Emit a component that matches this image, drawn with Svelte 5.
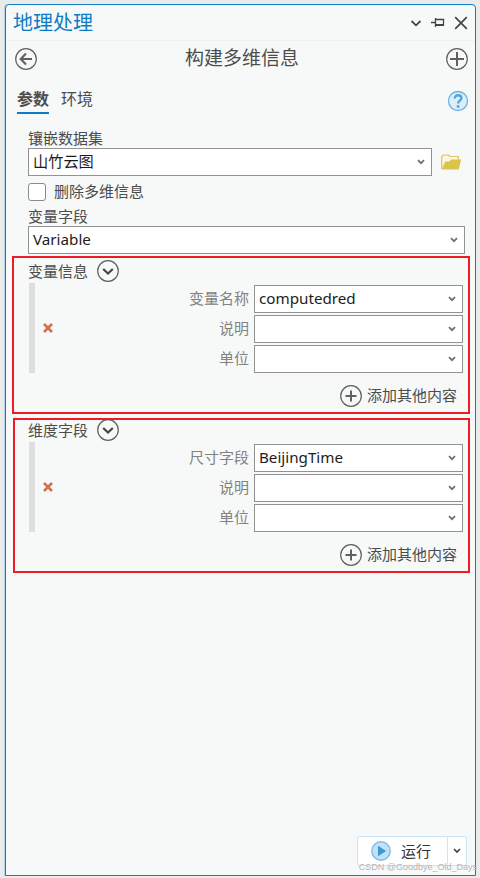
<script lang="ts">
  interface Field {
    label: string;
    value: string;
  }

  interface Group {
    id: string;
    title: string;
    fields: Field[];
  }

  let groups: Group[] = $state([
    {
      id: 'variables',
      title: '变量信息',
      fields: [
        { label: '变量名称', value: 'computedred' },
        { label: '说明', value: '' },
        { label: '单位', value: '' }
      ]
    },
    {
      id: 'dimensions',
      title: '维度字段',
      fields: [
        { label: '尺寸字段', value: 'BeijingTime' },
        { label: '说明', value: '' },
        { label: '单位', value: '' }
      ]
    }
  ]);

  const tabs = ['参数', '环境'];
  let activeTab = $state(0);
  let removeInfo = $state(false);
</script>

{#snippet combo(value: string)}
  <div class="combo">
    <span>{value}</span>
    <svg width="8" height="6" viewBox="0 0 8 6"><path d="M1 1.2 4 4.2 7 1.2" fill="none" stroke="#707070" stroke-width="1.8" /></svg>
  </div>
{/snippet}

{#snippet plus(size: number)}
  <svg width="22" height="22" viewBox="0 0 22 22" fill="none" stroke="#606060">
    <circle cx="11" cy="11" r="10.3" stroke-width="1.2" />
    <path d="M{11 - size} 11H{11 + size}M11 {11 - size}V{11 + size}" stroke-width="2" />
  </svg>
{/snippet}

<div class="window">
  <section class="pane">
    <header class="titlebar">
      <h1>地理处理</h1>
      <div class="window-tools">
        <svg width="12" height="12" viewBox="0 0 12 12"><path d="M1.5 4 6 8.3 10.5 4" fill="none" stroke="#444" stroke-width="1.8" /></svg>
        <svg width="14" height="12" viewBox="0 0 14 12" fill="none" stroke="#444"><path d="M0 5.5H4.5M4.5 1V10M4.5 2.5H12.5V8" stroke-width="1.3" /><path d="M4.5 8H13" stroke-width="2" /></svg>
        <svg width="14" height="14" viewBox="0 0 14 14"><path d="M1.2 1.2 12.8 12.8M12.8 1.2 1.2 12.8" stroke="#444" stroke-width="1.7" /></svg>
      </div>
    </header>

    <div class="toolbar">
      <svg width="22" height="22" viewBox="0 0 22 22" fill="none" stroke="#606060">
        <circle cx="11" cy="11" r="10.3" stroke-width="1.2" />
        <path d="M17 11H6M11 5.5 5.7 11 11 16.5" stroke-width="2.1" />
      </svg>
      <h2>构建多维信息</h2>
      {@render plus(7)}
    </div>

    <nav class="tabs">
      {#each tabs as tab, i}
        <button class:active={activeTab === i} onclick={() => (activeTab = i)}>{tab}</button>
      {/each}
      <svg class="help" width="22" height="22" viewBox="0 0 22 22" fill="none">
        <circle cx="11" cy="11" r="9.5" fill="#dceefb" stroke="#6bb3e0" stroke-width="1.3" />
        <path d="M7.7 8.5C7.7 6.4 9.2 5.3 11 5.3S14.4 6.4 14.4 8.2C14.4 10.6 11.1 10.6 11.1 13.4" stroke="#55a5da" stroke-width="2.4" />
        <path d="M11.1 15.2V17.8" stroke="#55a5da" stroke-width="2.6" />
      </svg>
    </nav>

    <div class="form">
      <div class="label">镶嵌数据集</div>
      <div class="dataset">
        {@render combo('山竹云图')}
        <svg width="21" height="16" viewBox="0 0 21 16">
          <path d="M.7 15V2.5L2.2 1H7.5L9 2.5H17.3V6" fill="#fbf6df" stroke="#dac65c" stroke-width="1.2" />
          <path d="M.8 15.6 4.2 7.5H8.4L10.2 5.6H20.2L17.8 15.6Z" fill="#dac54c" />
        </svg>
      </div>
      <label class="check">
        <input type="checkbox" bind:checked={removeInfo} />
        <span>删除多维信息</span>
      </label>
      <div class="label">变量字段</div>
      {@render combo('Variable')}
    </div>

    {#each groups as group (group.id)}
      <div class="group {group.id}">
        <div class="group-title">
          <span>{group.title}</span>
          <svg width="22" height="22" viewBox="0 0 22 22" fill="none">
            <circle cx="11" cy="11" r="10.3" stroke="#606060" stroke-width="1.2" />
            <path d="M6.2 9 11 13.5 15.8 9" stroke="#444" stroke-width="2.2" />
          </svg>
        </div>
        <div class="entry">
          <div class="bar"></div>
          <svg width="10" height="10" viewBox="0 0 10 10"><path d="M1 1 9 9M9 1 1 9" stroke="#cf7050" stroke-width="2.6" /></svg>
          <div class="fields">
            {#each group.fields as field}
              <div class="field">
                <span class="name">{field.label}</span>
                {@render combo(field.value)}
              </div>
            {/each}
          </div>
        </div>
        <div class="add">
          {@render plus(5.5)}
          <span>添加其他内容</span>
        </div>
      </div>
    {/each}

    <footer>
      <div class="run">
        <div class="run-main">
          <svg width="20" height="20" viewBox="0 0 20 20">
            <circle cx="10" cy="10" r="9.2" fill="#c3e1f6" stroke="#7fbbe4" stroke-width="1.4" />
            <path d="M7 4.8 15.2 10 7 15.2Z" fill="#3f97d3" />
          </svg>
          <span>运行</span>
        </div>
        <div class="run-more">
          <svg width="8" height="6" viewBox="0 0 8 6"><path d="M1 1 4 4 7 1" fill="none" stroke="#444" stroke-width="1.7" /></svg>
        </div>
      </div>
    </footer>
  </section>
  <div class="watermark">CSDN @Goodbye_Old_Days</div>
</div>

<style>
  :global(body) {
    background: #eaebeb;
  }

  .window {
    position: relative;
    box-sizing: border-box;
    width: 480px;
    height: 878px;
    padding: 4px 4px 2px 5px;
    overflow: hidden;
    font-family: 'Noto Sans', 'Noto Sans CJK SC', sans-serif;
    font-size: 15px;
    color: #4c4c4c;
  }

  svg {
    display: block;
    flex: none;
  }

  .pane {
    display: flex;
    flex-direction: column;
    box-sizing: border-box;
    height: 100%;
    background: #f7f9f9;
    border: 1px solid #0f7bc4;
    border-radius: 4px 4px 0 0;
    box-shadow: -1px 0 0 #b5d3e6;
  }

  .titlebar {
    display: flex;
    align-items: center;
    justify-content: space-between;
    box-sizing: border-box;
    height: 36px;
    padding: 0 7px;
    border-bottom: 1px solid #eef1f3;
  }

  h1 {
    margin: 0;
    font-size: 20px;
    line-height: 34px;
    font-weight: 400;
    color: #0f7bc4;
  }

  .window-tools {
    display: flex;
    align-items: center;
    gap: 9px;
  }

  .toolbar {
    display: flex;
    align-items: center;
    justify-content: space-between;
    height: 36px;
    padding: 0 7px 0 9px;
  }

  h2 {
    margin: 0;
    padding: 0 0 1px 1px;
    font-size: 19px;
    line-height: 35px;
    font-weight: 400;
  }

  .tabs {
    display: flex;
    gap: 12px;
    height: 37px;
    padding: 9px 6px 0 11px;
  }

  .tabs button {
    height: 28px;
    padding: 1px 0;
    border: 0;
    border-bottom: 2px solid transparent;
    background: none;
    font: inherit;
    font-size: 16px;
    line-height: 24px;
    color: inherit;
  }

  .tabs .active {
    border-color: #0f7bc4;
    font-weight: 700;
  }

  .help {
    margin: 4px 0 0 auto;
  }

  .form {
    box-sizing: border-box;
    height: 133px;
    padding: 6px 10px 0 22px;
  }

  .label {
    height: 19px;
    line-height: 19px;
  }

  .combo {
    display: flex;
    align-items: center;
    justify-content: space-between;
    box-sizing: border-box;
    height: 28px;
    padding: 0 6px 0 4px;
    border: 1px solid #929292;
    background: #fff;
    font-size: 15.2px;
    line-height: 24px;
    color: #1c1c1c;
  }

  .combo span {
    padding-bottom: 2px;
  }

  .dataset {
    display: flex;
    align-items: center;
    gap: 9px;
    padding-right: 3px;
  }

  .dataset .combo {
    flex: 1;
  }

  .check {
    display: flex;
    align-items: center;
    gap: 8px;
    height: 31px;
    line-height: 31px;
  }

  .check input {
    appearance: none;
    box-sizing: border-box;
    width: 18px;
    height: 18px;
    margin: 1px 0 0;
    border: 1px solid #8c8c8c;
    border-radius: 3px;
    background: #fff;
  }

  .group {
    box-sizing: border-box;
    height: 158px;
    margin: 0 5px 4px 6px;
    padding: 1px 5px 0 14px;
    border: 2px solid #ed1c24;
  }

  .dimensions {
    height: 155px;
    margin-left: 7px;
    padding: 0 5px 0 13px;
  }

  .dimensions .group-title {
    margin-top: -2px;
  }

  .group-title {
    display: flex;
    align-items: center;
    gap: 9px;
    height: 24px;
    line-height: 24px;
  }

  .entry {
    display: flex;
    align-items: center;
  }

  .bar {
    width: 6px;
    height: 90px;
    margin: 0 8px 0 1px;
    background: #dedede;
  }

  .fields {
    flex: 1;
    display: grid;
    gap: 2px;
    padding-top: 2px;
  }

  .field {
    display: grid;
    grid-template-columns: 1fr 209px;
    gap: 5px;
  }

  .name {
    line-height: 27px;
    text-align: right;
    color: #828282;
  }

  .add {
    display: flex;
    align-items: center;
    justify-content: flex-end;
    gap: 5px;
    margin-top: 12px;
    padding-right: 6px;
    line-height: 20px;
  }

  .add span {
    padding-bottom: 2px;
  }

  footer {
    display: flex;
    justify-content: flex-end;
    margin-top: auto;
    padding: 0 8px 9px 0;
  }

  .run {
    display: flex;
    box-sizing: border-box;
    width: 110px;
    height: 30px;
    border: 1px solid #c9e5f7;
    border-radius: 2px;
    background: #fff;
  }

  .run-main {
    display: flex;
    flex: 1;
    align-items: center;
    gap: 10px;
    padding-left: 13px;
    color: #333;
  }

  .run-main span {
    padding-bottom: 2px;
  }

  .run-more {
    display: flex;
    align-items: center;
    justify-content: center;
    width: 18px;
    border-left: 1px solid #c9e5f7;
  }

  .watermark {
    position: absolute;
    right: 3px;
    bottom: 5px;
    font-family: 'Liberation Sans', Arial, sans-serif;
    font-size: 9px;
    line-height: 12px;
    white-space: nowrap;
    color: #b4b6b8;
  }
</style>
